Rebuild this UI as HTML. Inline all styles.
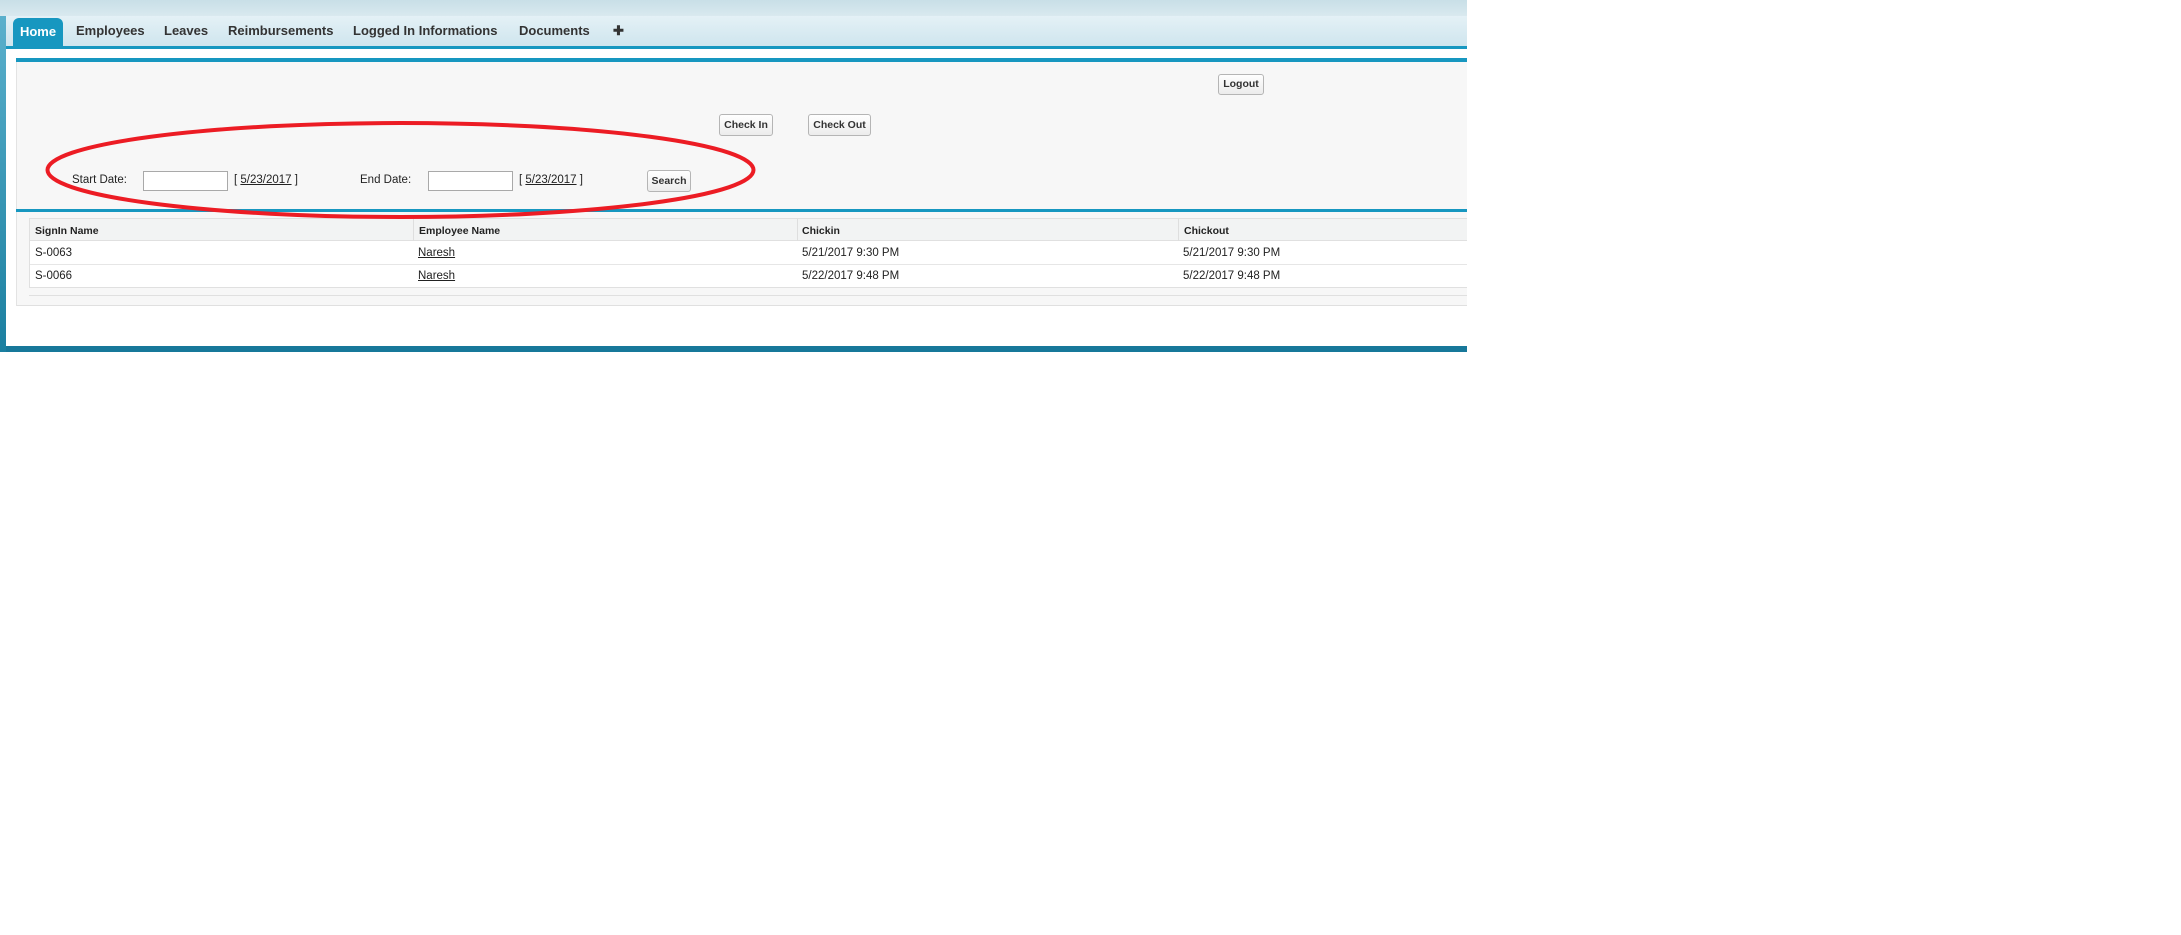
<!DOCTYPE html>
<html><head><meta charset="utf-8"><style>
*{margin:0;padding:0;box-sizing:border-box}
body{width:2181px;height:935px;background:#fff;position:relative;font-family:"Liberation Sans",Arial,sans-serif;overflow:hidden}
.a{position:absolute}
.top{left:0;top:0;width:1467px;height:16px;background:linear-gradient(#c8dfe7,#d9e9ef)}
.side{left:0;top:16px;width:6px;height:336px;background:linear-gradient(#5bb0cc,#1a7fa0)}
.bar{left:6px;top:16px;width:1461px;height:30px;background:linear-gradient(#e4f1f6,#cfe5ee)}
.bl{background:#1797c0}
.tab{top:23px;font-size:13px;font-weight:bold;color:#333}
.home{left:13px;top:18px;width:50px;height:28px;background:#1797c0;border-radius:6px 6px 0 0;color:#fff;font-size:13px;font-weight:bold;text-align:center;line-height:28px}
.panel{left:16px;top:62px;width:1451px;height:244px;background:#f7f7f7;border-left:1px solid #e3e3e3;border-bottom:1px solid #e0e0e0}
.btn{background:linear-gradient(#fff,#ececec);border:1px solid #b5b5b5;border-radius:3px;font-size:10.5px;font-weight:bold;color:#333;text-align:center}
.t{font-size:11.5px;color:#222}
.inp{background:#fff;border:1px solid #a9a9a9}
.lnk{font-size:11.5px;color:#222}
.th{font-size:10.5px;font-weight:bold;color:#222;top:225px}
.td{font-size:11.5px;color:#222}
</style></head><body>
<div class="a top"></div>
<div class="a bar"></div>
<div class="a side"></div>
<div class="a bl" style="left:6px;top:46px;width:1461px;height:3px"></div>
<div class="a home">Home</div>
<div class="a tab" style="left:76px">Employees</div>
<div class="a tab" style="left:164px">Leaves</div>
<div class="a tab" style="left:228px">Reimbursements</div>
<div class="a tab" style="left:353px">Logged In Informations</div>
<div class="a tab" style="left:519px">Documents</div>
<div class="a tab" style="left:613px">✚</div>
<div class="a bl" style="left:6px;top:346px;width:1461px;height:6px;background:#17789a"></div>

<div class="a panel"></div>
<div class="a bl" style="left:16px;top:58px;width:1451px;height:4px"></div>
<div class="a btn" style="left:1218px;top:74px;width:46px;height:21px;line-height:19px">Logout</div>
<div class="a btn" style="left:719px;top:114px;width:54px;height:22px;line-height:20px">Check In</div>
<div class="a btn" style="left:808px;top:114px;width:63px;height:22px;line-height:20px">Check Out</div>
<div class="a t" style="left:72px;top:174px">Start Date:</div>
<div class="a inp" style="left:143px;top:171px;width:85px;height:20px"></div>
<div class="a lnk" style="left:234px;top:174px">[ <u>5/23/2017</u> ]</div>
<div class="a t" style="left:360px;top:174px">End Date:</div>
<div class="a inp" style="left:428px;top:171px;width:85px;height:20px"></div>
<div class="a lnk" style="left:519px;top:174px">[ <u>5/23/2017</u> ]</div>
<div class="a btn" style="left:647px;top:170px;width:44px;height:22px;line-height:20px">Search</div>

<div class="a bl" style="left:16px;top:209px;width:1451px;height:3px"></div>
<div class="a" style="left:29px;top:218px;width:1438px;height:70px;border:1px solid #e0e0e0;border-right:none;background:#fff"></div>
<div class="a" style="left:30px;top:219px;width:1437px;height:22px;background:#f2f3f3;border-bottom:1px solid #e0e0e0"></div>
<div class="a" style="left:413px;top:219px;width:1px;height:22px;background:#dedede"></div>
<div class="a" style="left:797px;top:219px;width:1px;height:22px;background:#dedede"></div>
<div class="a" style="left:1178px;top:219px;width:1px;height:22px;background:#dedede"></div>
<div class="a" style="left:30px;top:264px;width:1437px;height:1px;background:#e6e6e6"></div>
<div class="a" style="left:29px;top:295px;width:1438px;height:1px;background:#e0e0e0"></div>
<div class="a th" style="left:35px">SignIn Name</div>
<div class="a th" style="left:419px">Employee Name</div>
<div class="a th" style="left:802px">Chickin</div>
<div class="a th" style="left:1184px">Chickout</div>
<div class="a td" style="left:35px;top:247px">S-0063</div>
<div class="a td" style="left:418px;top:247px"><u>Naresh</u></div>
<div class="a td" style="left:802px;top:247px">5/21/2017 9:30 PM</div>
<div class="a td" style="left:1183px;top:247px">5/21/2017 9:30 PM</div>
<div class="a td" style="left:35px;top:270px">S-0066</div>
<div class="a td" style="left:418px;top:270px"><u>Naresh</u></div>
<div class="a td" style="left:802px;top:270px">5/22/2017 9:48 PM</div>
<div class="a td" style="left:1183px;top:270px">5/22/2017 9:48 PM</div>

<svg class="a" style="left:0;top:0" width="900" height="300"><ellipse cx="400.5" cy="170" rx="353" ry="47" fill="none" stroke="#ec1c24" stroke-width="4"/></svg>
</body></html>
